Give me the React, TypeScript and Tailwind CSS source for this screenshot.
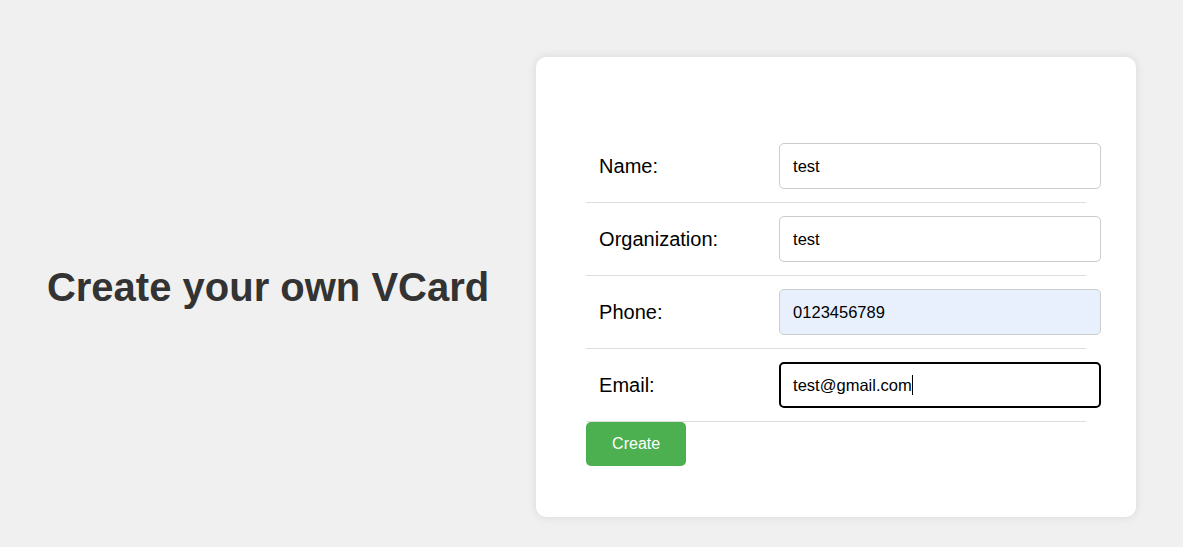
import React from "react";

const fields = [
	{ label: "Name:", value: "test", kind: "plain" },
	{ label: "Organization:", value: "test", kind: "plain" },
	{ label: "Phone:", value: "0123456789", kind: "autofill" },
	{ label: "Email:", value: "test@gmail.com", kind: "focus" },
];

export default function App() {
	return (
		<div className="min-h-screen w-full bg-[#f0f0f0] flex items-center justify-evenly pt-[27px] font-['Liberation_Sans',Arial,sans-serif]">
			<h1 className="text-[40px] font-bold text-[#333] leading-tight">
				Create your own VCard
			</h1>

			<div className="w-[600px] bg-white rounded-[10px] shadow-[0_0_10px_rgba(0,0,0,0.1)] pt-[73px] px-[50px] pb-[51px]">
				<div className="w-[500px]">
					{fields.map((f) => (
						<div
							key={f.label}
							className="flex items-center h-[73px] border-b border-[#ddd]"
						>
							<div className="w-[193px] shrink-0 pl-[13px] text-[20px] text-black">
								{f.label}
							</div>
							<div className="relative shrink-0">
								<input
									readOnly
									value={f.value}
									className={
										f.kind === "focus"
											? "w-[322px] h-[46px] px-[12px] rounded-[5px] border-2 border-black bg-white text-[16.5px] text-black outline-none"
											: f.kind === "autofill"
												? "w-[322px] h-[46px] px-[13px] rounded-[5px] border border-[#ccc] bg-[#e8f0fe] text-[16.5px] text-black outline-none"
												: "w-[322px] h-[46px] px-[13px] rounded-[5px] border border-[#ccc] bg-white text-[16.5px] text-black outline-none"
									}
								/>
								{f.kind === "focus" && (
									<span className="absolute left-[133px] top-[13px] h-[20px] w-px bg-black" />
								)}
							</div>
						</div>
					))}
				</div>
				<button className="block w-[100px] h-[44px] bg-[#4caf50] text-white text-[16px] rounded-[5px]">
					Create
				</button>
			</div>
		</div>
	);
}
